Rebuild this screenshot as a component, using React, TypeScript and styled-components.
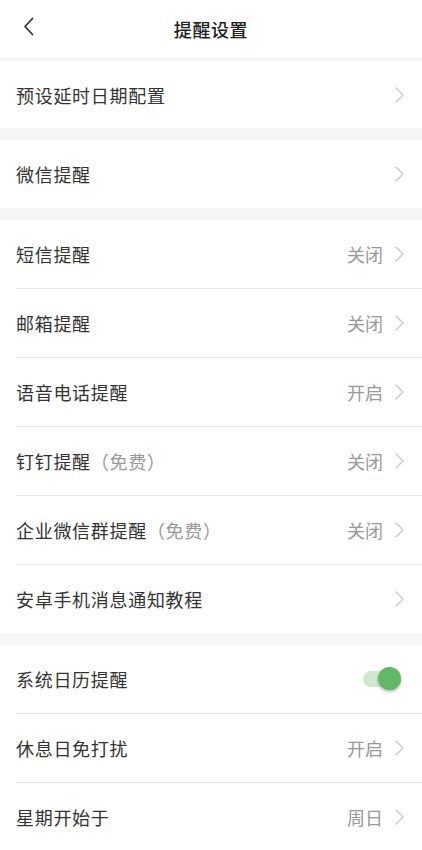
import styled, { createGlobalStyle } from 'styled-components'

const GlobalStyle = createGlobalStyle`
    html, body {
        margin: 0;
        padding: 0;
        background: #fff;
    }
    body {
        font-family: "Noto Sans CJK SC", "Noto Sans", sans-serif;
        color: #333;
    }
`

const Page = styled.div`
    width: 422px;
    min-height: 850px;
    background: #f6f6f6;
    display: flex;
    flex-direction: column;
`

const Header = styled.div`
    height: 57px;
    background: #fff;
    display: flex;
    align-items: center;
    justify-content: center;
    position: relative;
    margin-bottom: 4px;
`

const BackBtn = styled.div`
    position: absolute;
    left: 18px;
    top: 15px;
    width: 20px;
    height: 22px;
    display: flex;
    align-items: center;
    justify-content: center;
`

const Title = styled.div`
    font-size: 18px;
    font-weight: 500;
    color: #222;
    letter-spacing: 0.6px;
`

const Section = styled.div<{ $gap?: number }>`
    background: #fff;
    margin-bottom: ${p => p.$gap ?? 12}px;
    display: flex;
    flex-direction: column;
`

const Row = styled.div<{ $h?: number; $last?: boolean }>`
    height: ${p => p.$h ?? 68}px;
    margin-left: 16px;
    padding-right: 18px;
    display: flex;
    align-items: center;
    border-bottom: ${p => (p.$last ? 'none' : '1px solid #e8e8e8')};
`

const Label = styled.div`
    flex: 1;
    font-size: 18px;
    color: #333;
    letter-spacing: 0.7px;
`

const Note = styled.span`
    color: #999;
`

const Value = styled.div`
    font-size: 18px;
    color: #999;
    margin-right: 12px;
`

const Track = styled.div`
    width: 38px;
    height: 16px;
    border-radius: 8px;
    background: #cde8cf;
    position: relative;
    margin-right: 3px;
`

const Thumb = styled.div`
    position: absolute;
    right: 0;
    top: -4px;
    width: 23px;
    height: 23px;
    border-radius: 50%;
    background: #62b865;
    box-shadow: 0 2px 3px rgba(0, 0, 0, 0.25);
`

const Chevron = ({ color = '#c8c8c8', w = 9, h = 16 }: { color?: string; w?: number; h?: number }) => (
    <svg width={w} height={h} viewBox="0 0 9 16" fill="none">
        <path d="M1 1l7 7-7 7" stroke={color} strokeWidth="1.3" strokeLinecap="round" strokeLinejoin="round" />
    </svg>
)

type Item = { label: string; note?: string; value?: string; toggle?: boolean }

const groups: { items: Item[]; last?: boolean }[] = [
    { items: [{ label: '预设延时日期配置' }] },
    { items: [{ label: '微信提醒' }] },
    {
        items: [
            { label: '短信提醒', value: '关闭' },
            { label: '邮箱提醒', value: '关闭' },
            { label: '语音电话提醒', value: '开启' },
            { label: '钉钉提醒', note: '（免费）', value: '关闭' },
            { label: '企业微信群提醒', note: '（免费）', value: '关闭' },
            { label: '安卓手机消息通知教程' }
        ]
    },
    {
        items: [
            { label: '系统日历提醒', toggle: true },
            { label: '休息日免打扰', value: '开启' },
            { label: '星期开始于', value: '周日' }
        ],
        last: true
    }
]

export default function App() {
    return (
        <Page>
            <GlobalStyle />
            <Header>
                <BackBtn>
                    <svg width="11" height="19" viewBox="0 0 11 19" fill="none">
                        <path d="M9.5 1.5L2 9.5l7.5 8" stroke="#333" strokeWidth="1.8" strokeLinecap="round" strokeLinejoin="round" />
                    </svg>
                </BackBtn>
                <Title>提醒设置</Title>
            </Header>
            {groups.map((g, gi) => (
                <Section key={gi} $gap={g.last ? 0 : 12}>
                    {g.items.map((it, i) => (
                        <Row
                            key={it.label}
                            $h={gi === 0 ? 67 : 68}
                            $last={!g.last && i === g.items.length - 1}
                        >
                            <Label>
                                {it.label}
                                {it.note && <Note>{it.note}</Note>}
                            </Label>
                            {it.value && <Value>{it.value}</Value>}
                            {it.toggle ? (
                                <Track>
                                    <Thumb />
                                </Track>
                            ) : (
                                <Chevron />
                            )}
                        </Row>
                    ))}
                </Section>
            ))}
        </Page>
    )
}
